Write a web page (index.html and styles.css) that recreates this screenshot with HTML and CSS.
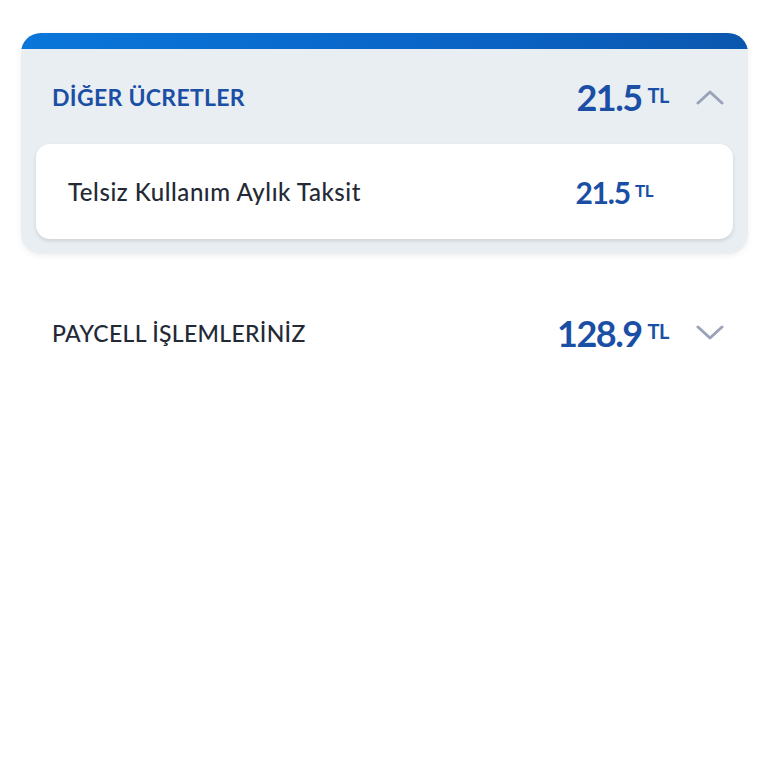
FILE: index.html
```html
<!DOCTYPE html>
<html lang="tr">
<head>
    <meta charset="UTF-8">
    <meta name="viewport" content="width=device-width, initial-scale=1.0">
    <title>Fatura Detayı</title>
    <link rel="stylesheet" href="styles.css">
</head>
<body>
    <div class="page">
        <section class="group open">
            <div class="group-bar"></div>
            <div class="group-head">
                <h2 class="group-title">DİĞER ÜCRETLER</h2>
                <div class="group-right">
                    <span class="amount">21.5<sup>TL</sup></span>
                    <svg class="chevron" width="28" height="16" viewBox="0 0 28 16">
                        <path d="M2 14 L14 3 L26 14" fill="none" stroke="#9ba3b9" stroke-width="3" stroke-linecap="round" stroke-linejoin="round"/>
                    </svg>
                </div>
            </div>
            <div class="item">
                <span class="item-name">Telsiz Kullanım Aylık Taksit</span>
                <span class="amount small">21.5<sup>TL</sup></span>
            </div>
        </section>

        <section class="group closed">
            <div class="group-head">
                <h2 class="group-title">PAYCELL İŞLEMLERİNİZ</h2>
                <div class="group-right">
                    <span class="amount">128.9<sup>TL</sup></span>
                    <svg class="chevron" width="28" height="16" viewBox="0 0 28 16">
                        <path d="M2 2 L14 13 L26 2" fill="none" stroke="#9ba3b9" stroke-width="3" stroke-linecap="round" stroke-linejoin="round"/>
                    </svg>
                </div>
            </div>
        </section>
    </div>
</body>
</html>
```

FILE: styles.css
```css
body {
    margin: 0;
    background: #fff;
    font-family: Lato, "Noto Sans", sans-serif;
    color: #232a35;
}
.page {
    padding: 33px 20px 0 21px;
}
.group.open {
    background: #e9eef2;
    border-radius: 20px;
    box-shadow: 0 2px 6px rgba(0, 0, 0, 0.06);
    padding-bottom: 15px;
    overflow: hidden;
}
.group-bar {
    height: 16px;
    background: linear-gradient(90deg, #0a76da, #0a64c6 60%, #0b57ae);
}
.group-head {
    display: flex;
    align-items: center;
    justify-content: space-between;
    height: 95px;
    padding: 0 24px 0 31px;
}
.group-title {
    margin: 0;
    font-size: 23px;
    font-weight: 700;
    color: #1b4fa6;
    letter-spacing: 0.3px;
}
.closed .group-head {
    margin-top: 30px;
    height: 98px;
}
.closed .group-title {
    font-weight: 500;
    color: #232a35;
}
.group-right {
    display: flex;
    align-items: center;
    gap: 27px;
}
.amount {
    font-size: 36px;
    font-weight: 700;
    color: #1b4fa6;
    letter-spacing: -1.5px;
    line-height: 1;
}
.amount sup {
    font-size: 20px;
    font-weight: 700;
    letter-spacing: -0.5px;
    margin-left: 6px;
    vertical-align: 8px;
}
.chevron {
    display: block;
}
.item {
    display: flex;
    align-items: center;
    justify-content: space-between;
    height: 95px;
    margin: 0 15px;
    padding: 0 80px 0 32px;
    background: #fff;
    border-radius: 14px;
    box-shadow: 0 2px 4px rgba(0, 0, 0, 0.12);
}
.item-name {
    font-size: 24px;
    font-weight: 500;
    letter-spacing: 0.55px;
    color: #232a35;
}
.amount.small {
    font-size: 30px;
    letter-spacing: -1.2px;
}
.amount.small sup {
    font-size: 17px;
    margin-left: 5px;
    vertical-align: 7px;
}
```
